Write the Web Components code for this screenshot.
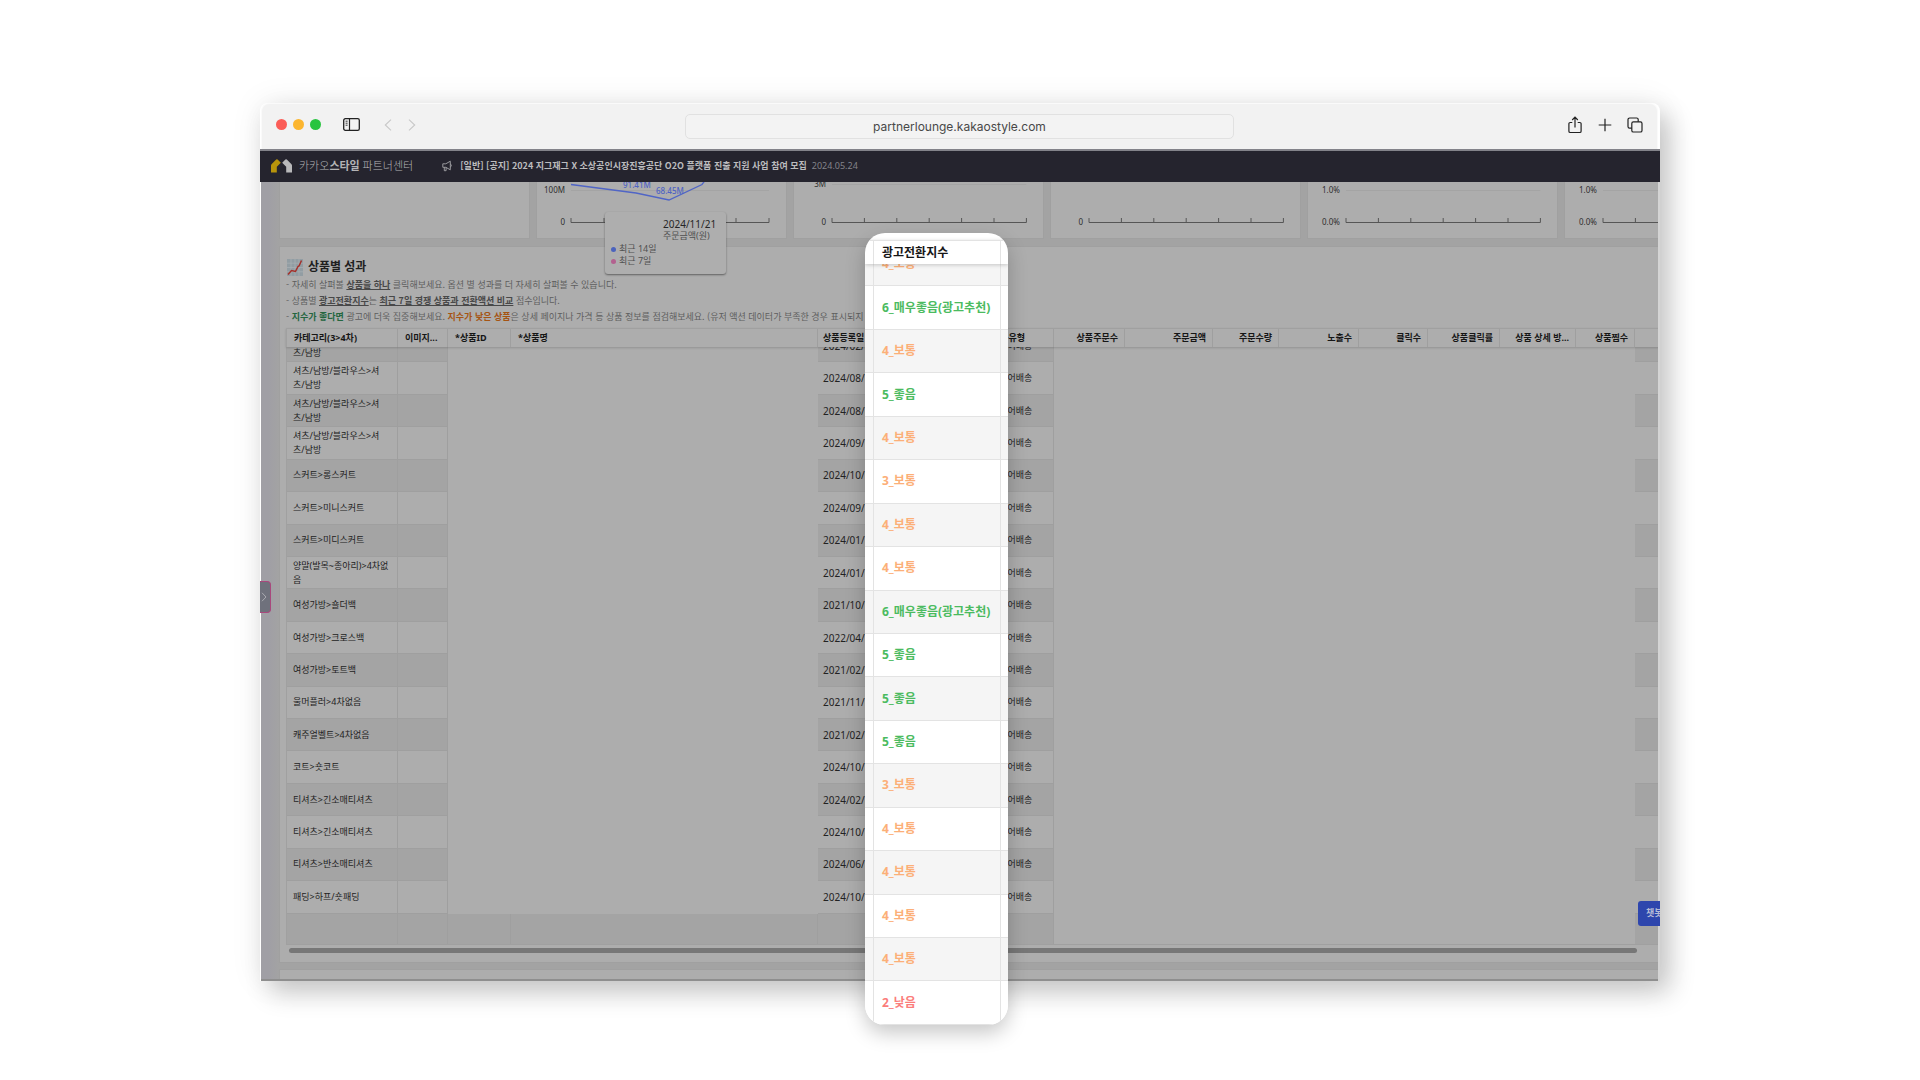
<!DOCTYPE html>
<html lang="ko">
<head>
<meta charset="utf-8">
<title>카카오스타일 파트너센터</title>
<style>
html{background:#fff}
body{margin:0;padding:103px 260px 0;box-sizing:border-box;min-height:100vh;font-family:"Noto Sans","Noto Sans CJK KR",sans-serif}
</style>
</head>
<body>
<browser-window>
  <browser-toolbar slot="toolbar" url="partnerlounge.kakaostyle.com"></browser-toolbar>
  <partner-header slot="header"></partner-header>
  <chart-card></chart-card>
  <chart-card kind="sales" top-label="100M" base="0"></chart-card>
  <chart-card kind="count" top-label="3M" base="0"></chart-card>
  <chart-card base="0"></chart-card>
  <chart-card kind="rate" top-label="1.0%" base="0.0%"></chart-card>
  <chart-card kind="rate" top-label="1.0%" base="0.0%"></chart-card>
  <product-panel slot="panel"></product-panel>
  <chart-tooltip slot="overlay"></chart-tooltip>
  <side-tab slot="overlay"></side-tab>
  <chat-button slot="overlay"></chat-button>
  <score-column slot="popup"></score-column>
</browser-window>
<script>
class BaseElement extends HTMLElement{
  connectedCallback(){
    if(this.shadowRoot)return;
    this.attachShadow({mode:'open'}).innerHTML='<style>:host,*{box-sizing:border-box}'+this.css()+'</style>'+this.html();
  }
}

customElements.define('browser-window',class extends BaseElement{
  css(){return `
  :host{display:block;position:relative}
  .frame{position:relative;box-shadow:10px 12px 26px rgba(0,0,0,.2),0 0 32px rgba(0,0,0,.08);border-radius:8px 8px 0 0}
  .bar{margin:0 2px 0 1px}
  .page{position:relative;margin-left:1px;border-right:2px solid #d4d4d4;overflow:hidden;
    background:linear-gradient(90deg,#a09fa5 0,#a09fa5 8px,#a3a3a3 18px)}
  .content{padding-left:18px}
  .charts{display:flex;gap:6px;height:57px}
  .panel{margin-top:7px}
  .next{height:10px;margin-top:6px;background:#adadad;border:1px solid #a0a0a0;border-bottom:0;margin-right:-2px}
  .foot{height:2px;background:#8e8e8e}
  `}
  html(){return `
  <div class="frame">
    <div class="bar"><slot name="toolbar"></slot></div>
    <slot name="header"></slot>
    <div class="page"><main class="content">
      <div class="charts"><slot></slot></div>
      <div class="panel"><slot name="panel"></slot></div>
      <div class="next"></div></main>
      <div class="foot"></div>
    </div>
    <slot name="overlay"></slot>
  </div>
  <slot name="popup"></slot>`}
});

customElements.define('browser-toolbar',class extends BaseElement{
  css(){return `
  :host{display:block}
  .bar{display:flex;align-items:center;height:46px;padding:0 14px 4px;background:#f2f2f2;border:1px solid #fafafa;border-bottom:0;border-radius:8px 8px 0 0}
  .side{flex:1;display:flex;align-items:center}
  .right{justify-content:flex-end;gap:15px}
  .dot{width:11px;height:11px;border-radius:50%;margin-right:6px}
  button{display:flex;padding:0;border:0;background:none}
  .panelbtn{margin:0 24px 0 16px}
  .nav{display:flex;gap:16px}
  svg{display:block;fill:none;stroke:#222}
  .nav svg{stroke:#c8c8c8}
  input{flex:0 1 549px;height:25px;margin-top:4px;padding:0;text-align:center;background:#f3f3f3;border:1px solid #e1e1e1;border-radius:5px;color:#484848;font:12px/23px Inter,sans-serif}
  `}
  html(){return `
  <div class="bar">
    <div class="side">
      <i class="dot" style="background:#fb5d57"></i><i class="dot" style="background:#fcb62f"></i><i class="dot" style="background:#28c43f"></i>
      <button class="panelbtn" aria-label="사이드바"><svg width="17" height="13" viewBox="0 0 17 13"><rect x=".7" y=".7" width="15.6" height="11.6" rx="1.6" stroke-width="1.3"/><path d="M6.5 1v11" stroke-width="1.2"/><path d="M2.6 3.2h2M2.6 5.2h2M2.6 7.2h2" stroke-width=".9"/></svg></button>
      <div class="nav">
        <button aria-label="뒤로"><svg width="8" height="12" viewBox="0 0 8 12"><path d="M7 .7L1.3 6 7 11.3" stroke-width="1.1"/></svg></button>
        <button aria-label="앞으로"><svg width="8" height="12" viewBox="0 0 8 12"><path d="M1 .7L6.7 6 1 11.3" stroke-width="1.1"/></svg></button>
      </div>
    </div>
    <input type="text" aria-label="주소" readonly value="${this.getAttribute('url')}">
    <div class="side right">
      <button aria-label="공유"><svg width="16" height="18" viewBox="0 0 16 18"><path d="M5.3 6.5H3.2a1.3 1.3 0 0 0-1.3 1.3v7.4a1.3 1.3 0 0 0 1.3 1.3h9.6a1.3 1.3 0 0 0 1.3-1.3V7.8a1.3 1.3 0 0 0-1.3-1.3h-2.1M8 11.5V1.500M5.200 4L8 1.200 10.800 4" stroke-width="1.200"/></svg></button>
      <button aria-label="새 탭"><svg width="14" height="14" viewBox="0 0 14 14"><path d="M7 .7v12.6M.7 7h12.6" stroke-width="1.2"/></svg></button>
      <button aria-label="탭 보기"><svg width="16" height="16" viewBox="0 0 16 16"><rect x="4.8" y="4.8" width="10.2" height="10.2" rx="1.6" stroke-width="1.2"/><path d="M4.8 11.2H2.6A1.6 1.6 0 0 1 1 9.6v-7A1.6 1.6 0 0 1 2.6 1h7a1.6 1.6 0 0 1 1.6 1.6v2.2" stroke-width="1.2"/></svg></button>
    </div>
  </div>`}
});

customElements.define('partner-header',class extends BaseElement{
  css(){return `
  :host{display:block}
  header{display:flex;align-items:center;height:33px;border-top:2px solid #83838a;background:#25242e;padding:0 0 2px 11px;color:#b4b4b6;white-space:nowrap}
  .logo{margin-right:7px}
  .name{font-size:11px;line-height:16px;font-weight:300;margin-right:29px}
  .name b{font-weight:700}
  .notice{font:700 9px/14px "Noto Sans CJK KR",sans-serif;margin:0 5px 0 7px;color:#bcbcbe;text-decoration:none}
  time{font-size:9px;line-height:14px;color:#83838a}
  svg{display:block}
  `}
  html(){return `
  <header>
    <svg class="logo" width="21" height="14" viewBox="0 0 21 14"><path d="M0 13.5V6.6Q0 5.9 .5 5.3L5.2 .6Q5.9 0 6.6 .5L9.8 3.7 5.8 7.7v5.8z" fill="#b8940b"/><path d="M21 13.5V6.6Q21 5.9 20.5 5.3L15.8 .6Q15.1 0 14.4 .5L11.2 3.7 15.2 7.7v5.8z" fill="#b9b9bb"/></svg>
    <span class="name">카카오<b>스타일</b> 파트너센터</span>
    <svg width="11" height="12" viewBox="0 0 11 12" fill="none" stroke="#a5a5a8" stroke-width=".9"><path d="M.8 3.8h3L8.3 1.2v8.6L3.8 7.3h-3zM2.3 7.3v3.4h1.8V7.5M8.3 4a1.6 1.6 0 0 1 0 3"/></svg>
    <a class="notice" href="#">[일반] [공지] 2024 지그재그 X 소상공인시장진흥공단 O2O 플랫폼 진출 지원 사업 참여 모집</a>
    <time>2024.05.24</time>
  </header>`}
});

customElements.define('chart-card',class extends BaseElement{
  css(){return `
  :host{display:block;flex:0 0 251px;height:57px;background:#adadad;border:1px solid #a0a0a0;border-top:0}
  svg{display:block;width:249px;height:56px;font:8px "Noto Sans",sans-serif;fill:#2e2e2e}
  `}
  html(){
    const base=this.getAttribute('base');
    if(base===null)return '';
    const top=this.getAttribute('top-label'),kind=this.getAttribute('kind');
    const y0=kind==='count'?2:8;
    const start=kind==='sales'?34:38,step=kind==='sales'?33:32.4;
    const ticks=[0,1,2,3,4,5,6].map(i=>`M${start+i*step} 36v4.5`).join('');
    const label=start-6;
    return `<svg viewBox="0 0 249 56">
    ${top?`<path d="M${start} ${y0+.5}h${step*6}" stroke="#a4a4a4"/><text x="${label}" y="${y0+3}" text-anchor="end">${top}</text>`:''}
    <path d="M${start} 40.5h${step*6}${ticks}" fill="none" stroke="#565656"/>
    <text x="${label}" y="43" text-anchor="end">${base}</text>
    ${kind==='sales'?`<path d="M34 2.5L99 11l33 7 33-15.5 3-4" fill="none" stroke="#5065c6" stroke-width="1.3"/><g fill="#4e63c4" font-weight="500"><text x="86" y="6">91.41M</text><text x="119" y="12">68.45M</text></g>`:''}
    </svg>`}
});

customElements.define('product-panel',class extends BaseElement{
  css(){return `
  :host{display:block;margin-right:-2px}
  section{background:#adadad;border:1px solid #a0a0a0;border-right:0;padding:10px 0 9px 6px;overflow:hidden}
  h2{display:flex;align-items:center;gap:5px;margin:0 0 0 1px;height:20px;font-size:12px;line-height:20px;font-weight:700;color:#1f1f1f}
  p{margin:0;font:9px/16px "Noto Sans CJK KR",sans-serif;height:16px;color:#5e5e5e;white-space:nowrap}
  p u{font-weight:700;color:#484848;text-underline-offset:1px}
  .good{color:#24663f}.bad{color:#a55413}
  product-table{margin-top:3px}
  .scroll{height:5px;border-radius:3px;background:#777;margin:3px 23px 0 3px}
  `}
  html(){return `
  <section>
    <h2><svg width="16" height="17" viewBox="0 0 16 17"><rect width="16" height="17" fill="#929da3"/><path d="M0 4.2h16M0 8.5h16M0 12.8h16M4 0v17M8 0v17M12 0v17" stroke="#aab2b6" stroke-width=".7"/><path d="M1 15.5l3.5-4 4 1L11 7.5l1-.5L14.5 1.5" fill="none" stroke="#a5302a" stroke-width="1.5"/></svg>상품별 성과</h2>
    <p>- 자세히 살펴볼 <u>상품을 하나</u> 클릭해보세요. 옵션 별 성과를 더 자세히 살펴볼 수 있습니다.</p>
    <p>- 상품별 <u>광고전환지수</u>는 <u>최근 7일 경쟁 상품과 전환액션 비교</u> 점수입니다.</p>
    <p>- <b class="good">지수가 좋다면</b> 광고에 더욱 집중해보세요. <b class="bad">지수가 낮은 상품</b>은 상세 페이지나 가격 등 상품 정보를 점검해보세요. (유저 액션 데이터가 부족한 경우 표시되지 않을</p>
    <product-table></product-table>
    <div class="scroll"></div>
  </section>`}
});

const PRODUCTS=[
  ['셔츠/남방/블라우스>셔<br>츠/남방','2024/02/'],
  ['셔츠/남방/블라우스>셔<br>츠/남방','2024/08/'],
  ['셔츠/남방/블라우스>셔<br>츠/남방','2024/08/'],
  ['셔츠/남방/블라우스>셔<br>츠/남방','2024/09/'],
  ['스커트>롱스커트','2024/10/'],
  ['스커트>미니스커트','2024/09/'],
  ['스커트>미디스커트','2024/01/'],
  ['양말(발목~종아리)>4차없<br>음','2024/01/'],
  ['여성가방>숄더백','2021/10/'],
  ['여성가방>크로스백','2022/04/'],
  ['여성가방>토트백','2021/02/'],
  ['울머플러>4차없음','2021/11/'],
  ['캐주얼벨트>4차없음','2021/02/'],
  ['코트>숏코트','2024/10/'],
  ['티셔츠>긴소매티셔츠','2024/02/'],
  ['티셔츠>긴소매티셔츠','2024/10/'],
  ['티셔츠>반소매티셔츠','2024/06/'],
  ['패딩>하프/숏패딩','2024/10/']
];

customElements.define('product-table',class extends BaseElement{
  css(){return `
  :host{display:block}
  table{width:1376px;table-layout:fixed;border-collapse:separate;border-spacing:0;font-size:9px;line-height:14px;color:#222}
  th,td{padding:0 6px;text-align:left;font-weight:400;border-right:1px solid #9f9f9f;white-space:nowrap;overflow:hidden}
  .head{border-top:1px solid #a0a0a0;border-left:1px solid #a0a0a0;position:relative;box-shadow:0 1px 2px rgba(0,0,0,.16)}
  .head th{height:18px;padding:0 7px;font-weight:700;color:#161616}
  .head th.n{text-align:right;padding-right:6px}
  .head th.d{padding-left:5px}
  .view{height:598px;display:flex;flex-direction:column;justify-content:flex-end;overflow:hidden;border-bottom:1px solid #a0a0a0;border-left:1px solid #a0a0a0}
  .view table{height:614px;flex:none}
  .view td{height:32px;border-bottom:1px solid #9f9f9f}
  .view tr:last-child td{height:30px;border-bottom:0}
  .view tr:nth-child(odd) td{background:#a4a4a4}
  .view tr:nth-child(even) td{background:#adadad}
  .view tr td.mask{background:#adadad;border-color:#adadad}
  .view td.date{font-size:10px;padding:0 5px;border-right-color:transparent}
  .view td.kind{padding-left:6px}
  `}
  html(){
    const widths=[111,50,63,307,84,83,69,71,88,66,80,69,72,76,59,28];
    const cols='<colgroup>'+widths.map(w=>`<col style="width:${w}px">`).join('')+'</colgroup>';
    const mask=n=>'<td class="mask"></td>'.repeat(n);
    return `
    <table class="head">${cols}<thead><tr><th>카테고리(3>4차)</th><th>이미지...</th><th>*상품ID</th><th>*상품명</th><th class="d">상품등록일</th><th></th><th>배송유형</th><th class="n">상품주문수</th><th class="n">주문금액</th><th class="n">주문수량</th><th class="n">노출수</th><th class="n">클릭수</th><th class="n">상품클릭률</th><th class="n">상품 상세 방...</th><th class="n">상품찜수</th><th></th></tr></thead></table>
    <div class="view"><table>${cols}<tbody>${PRODUCTS.map(([c,d])=>`<tr><td>${c}</td><td></td>${mask(2)}<td class="date">${d}</td><td></td><td class="kind">스토어배송</td>${mask(8)}<td></td></tr>`).join('')}
    <tr><td></td><td></td><td></td><td></td><td></td><td></td><td></td>${mask(8)}<td></td></tr></tbody></table></div>`}
});

customElements.define('chart-tooltip',class extends BaseElement{
  css(){return `
  :host{display:block;position:absolute;left:345px;top:109px;width:121px;height:62px;padding:6px 5px 6px 6px;background:#aeaeae;border-radius:3px;box-shadow:0 1px 2px rgba(0,0,0,.45);font-size:9px;line-height:12px;color:#505050}
  .top{display:flex;flex-direction:column;margin-left:52px;margin-bottom:1px}
  .date{font-size:10px;color:#262626}
  .item{display:flex;align-items:center;gap:3px}
  i{width:5px;height:5px;border-radius:50%}
  `}
  html(){return `
  <div class="top"><span class="date">2024/11/21</span><span>주문금액(원)</span></div>
  <div class="item"><i style="background:#4b63bd"></i>최근 14일</div>
  <div class="item"><i style="background:#b3618f"></i>최근 7일</div>`}
});

customElements.define('side-tab',class extends BaseElement{
  css(){return `
  :host{display:block;position:absolute;left:0;top:478px}
  button{display:flex;align-items:center;justify-content:center;width:11px;height:32px;padding:0 2px 0 0;background:#6f717c;border:1px solid #a9487c;border-left:0;border-radius:0 4px 4px 0}
  `}
  html(){return `<button aria-label="메뉴 열기"><svg width="6" height="10" viewBox="0 0 6 10" fill="none" stroke="#a9a9b0"><path d="M1 .8L5 5 1 9.2"/></svg></button>`}
});

customElements.define('chat-button',class extends BaseElement{
  css(){return `
  :host{display:block;position:absolute;right:0;top:798px;width:22px;overflow:hidden}
  button{display:block;width:44px;height:25px;padding:0 8px 2px;text-align:left;border:0;border-radius:3px;background:#2e46ad;color:#b5bbd6;font:700 9px/23px "Noto Sans","Noto Sans CJK KR",sans-serif;white-space:nowrap}
  `}
  html(){return `<button>챗봇</button>`}
});

const SCORES=['4_보통','6_매우좋음(광고추천)','4_보통','5_좋음','4_보통','3_보통','4_보통','4_보통','6_매우좋음(광고추천)','5_좋음','5_좋음','5_좋음','3_보통','4_보통','4_보통','4_보통','4_보통','2_낮음'];

customElements.define('score-column',class extends BaseElement{
  css(){return `
  :host{display:block;position:absolute;left:605px;top:130px;width:143px;padding-top:7px;overflow:hidden;border-radius:20px;background:#fff;box-shadow:0 8px 20px rgba(0,0,0,.22)}
  table{width:100%;table-layout:fixed;border-collapse:separate;border-spacing:0;font-size:12px;line-height:16px}
  th,td{padding:0 0 0 8px;text-align:left;border-right:1px solid #e3e3e3;white-space:nowrap}
  th:last-child,td:last-child{border-right:0}
  .head{position:relative;border-top:1px solid #e3e3e3;box-shadow:0 1px 4px rgba(0,0,0,.2)}
  .head th{height:23px;font-weight:700;color:#161616}
  .view{height:761px;display:flex;flex-direction:column;justify-content:flex-end;overflow:hidden}
  .view table{height:782px;flex:none}
  td{border-bottom:1px solid #e3e3e3;font-weight:700}
  tr:nth-child(odd) td{background:#f5f5f5}
  tr:nth-child(even) td{background:#fff}
  .good{color:#4bbb60}.mid{color:#fcaf78}.low{color:#fb7c7a}
  `}
  html(){
    const cols='<colgroup><col style="width:9px"><col><col style="width:7px"></colgroup>';
    const tone=s=>s[0]>'4'?'good':s[0]>'2'?'mid':'low';
    return `
    <table class="head">${cols}<thead><tr><th></th><th>광고전환지수</th><th></th></tr></thead></table>
    <div class="view"><table>${cols}<tbody>${SCORES.map(s=>`<tr><td></td><td class="${tone(s)}">${s}</td><td></td></tr>`).join('')}</tbody></table></div>`}
});
</script>
</body>
</html>
